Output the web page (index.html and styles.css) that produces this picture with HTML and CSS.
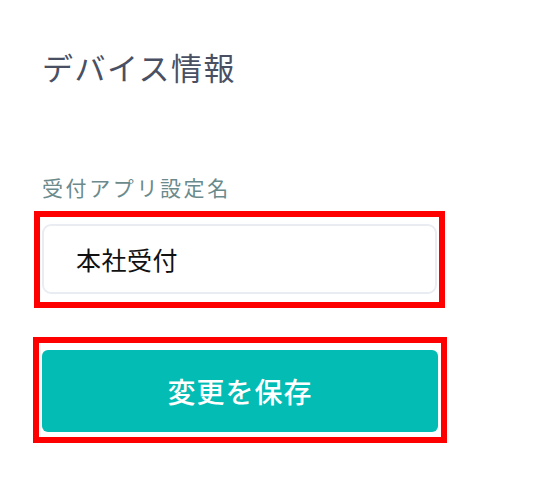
FILE: index.html
```html
<!DOCTYPE html>
<html lang="ja">
<head>
<meta charset="utf-8">
<link rel="stylesheet" href="styles.css">
</head>
<body>
<main class="page">
  <h1 class="title">デバイス情報</h1>
  <label class="label" for="name">受付アプリ設定名</label>
  <div class="mark mark-input">
    <input id="name" class="input" type="text" value="本社受付">
  </div>
  <div class="mark mark-button">
    <button class="save" type="button">変更を保存</button>
  </div>
</main>
</body>
</html>
```
FILE: styles.css
```css
* { box-sizing: border-box; }
html, body {
  margin: 0;
  background: #ffffff;
}
body {
  font-family: "Noto Sans CJK JP", "Noto Sans", sans-serif;
}
.page {
  width: 544px;
  height: 496px;
  padding: 47px 0 0 34px;
  display: flex;
  flex-direction: column;
  align-items: flex-start;
}
.title {
  margin: 0 0 0 8px;
  font-size: 31px;
  line-height: 40px;
  font-weight: 400;
  color: #4a5063;
  letter-spacing: 1.5px;
}
.label {
  margin: 85px 0 0 8px;
  font-size: 21px;
  line-height: 30px;
  color: #6b8a8c;
  letter-spacing: 2.6px;
}
.mark {
  border: 6px solid #ff0000;
}
.mark-input {
  margin-top: 9px;
  width: 411px;
  padding: 7px 2px 8px 2px;
}
.input {
  display: block;
  width: 395px;
  height: 70px;
  border: 2px solid #e9edf2;
  border-radius: 9px;
  padding: 0 0 0 32px;
  font-family: inherit;
  font-size: 25px;
  letter-spacing: 0.5px;
  color: #111111;
  background: #ffffff;
  outline: none;
}
.mark-button {
  margin: 29px 0 0 -1px;
  width: 414px;
  padding: 7px 3px 5px 3px;
}
.save {
  display: block;
  width: 396px;
  height: 82px;
  border: 0;
  border-radius: 6px;
  background: #03bcb4;
  color: #ffffff;
  font-family: inherit;
  font-size: 28px;
  font-weight: 500;
  letter-spacing: 1px;
  cursor: pointer;
}
```
